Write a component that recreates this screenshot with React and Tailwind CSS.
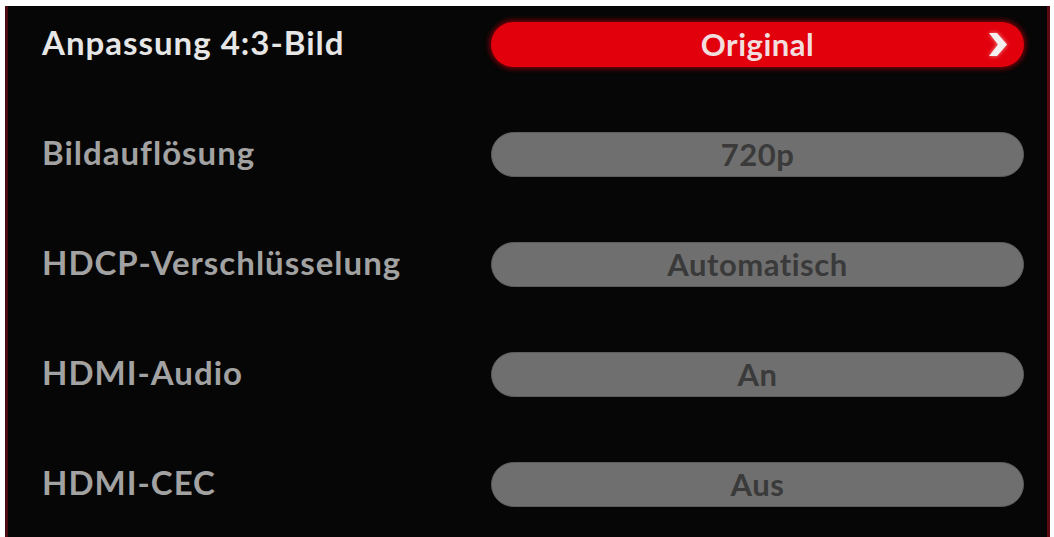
import React from "react";

const rows = [
  { label: "Anpassung 4:3-Bild", value: "Original", active: true },
  { label: "Bildauflösung", value: "720p" },
  { label: "HDCP-Verschlüsselung", value: "Automatisch" },
  { label: "HDMI-Audio", value: "An" },
  { label: "HDMI-CEC", value: "Aus" },
];

const Chevron = () => (
  <svg width="18" height="25" viewBox="0 0 18 25" className="drop-shadow-[0_0_2px_rgba(255,255,255,0.6)]">
    <polygon points="0,1 8,1 18,12.5 8,24 0,24 9,12.5" fill="#f4f0f0" />
  </svg>
);

const SettingRow = ({ label, value, active }) => (
  <div className="flex items-center h-[45px]">
    <span
      className={`w-[449px] text-[33px] font-bold tracking-[1px] leading-none -mt-[4px] ${
        active ? "text-[#e6e6e6]" : "text-[#a2a2a2]"
      }`}
    >
      {label}
    </span>
    {active ? (
      <div className="relative w-[533px] h-[45px] rounded-full bg-[#e2000c] shadow-[0_0_5px_2px_rgba(150,0,10,0.8)] flex items-center justify-center">
        <span className="text-[31px] font-bold tracking-[0.5px] text-[#f2dede] leading-none">{value}</span>
        <span className="absolute right-[17px] top-[10px]">
          <Chevron />
        </span>
      </div>
    ) : (
      <div className="w-[533px] h-[45px] rounded-full bg-[#6f6f6f] border border-[#5c5c5c] flex items-center justify-center">
        <span className="text-[31px] font-bold tracking-[0.5px] text-[#3a3a3a] leading-none">{value}</span>
      </div>
    )}
  </div>
);

export default function App() {
  return (
    <div
      className="w-[1054px] h-[537px] bg-white pt-[6px] pl-[5px] pr-[4px] flex"
      style={{ fontFamily: "Lato, 'Noto Sans', sans-serif" }}
    >
      <div className="flex-1 bg-[#060606] border-l-[3px] border-r-[3px] border-l-[#4a0a14] border-r-[#5a0a12] pl-[34px] pt-[16px] flex flex-col gap-[65px]">
        {rows.map((r) => (
          <SettingRow key={r.label} {...r} />
        ))}
      </div>
    </div>
  );
}
